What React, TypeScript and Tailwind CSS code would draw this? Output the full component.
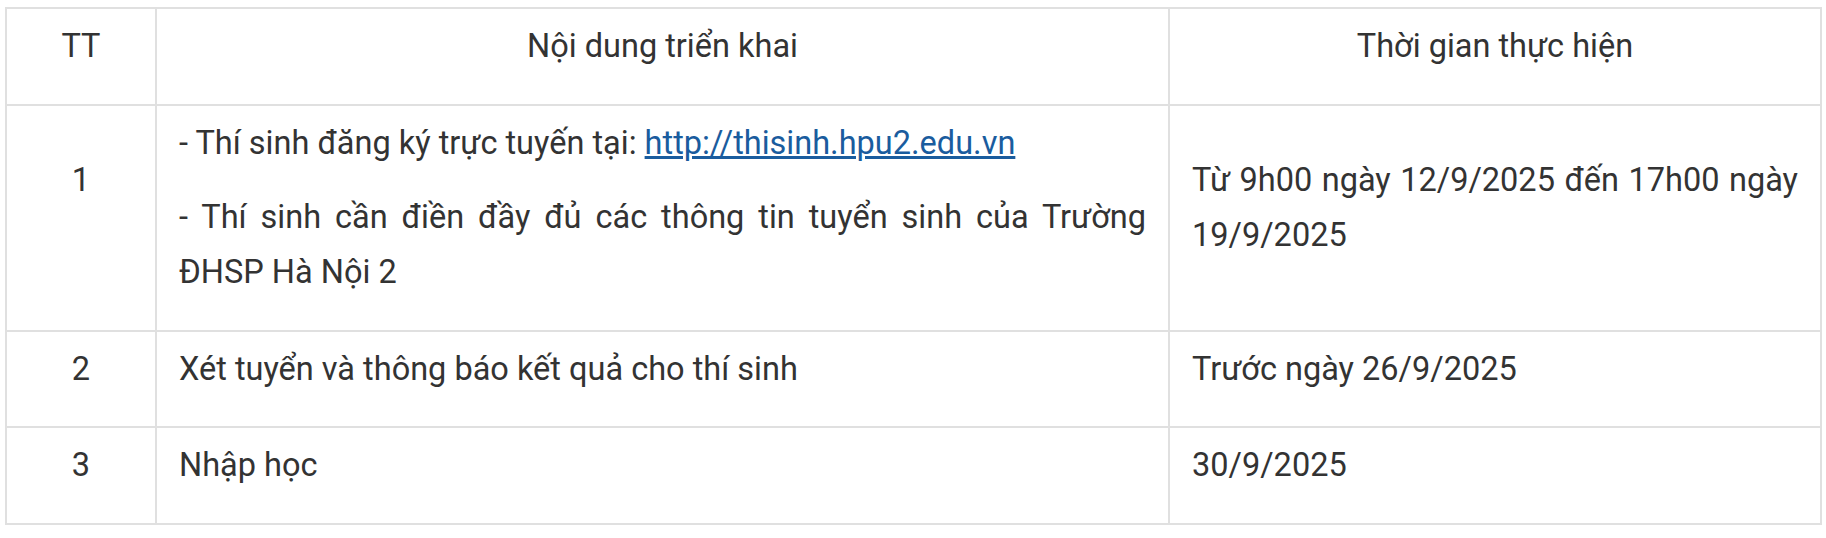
export default function App() {
  const cell = "border-2 border-[#e0e0e0] px-[22px] py-[10px] align-middle";
  const p = "mb-[19.5px]";

  return (
    <div className="min-h-screen bg-white pl-[5px] pt-[7px] font-['Roboto',sans-serif] text-[32.5px] leading-[55px] text-[#333]">
      <table className="w-[1815px] table-fixed border-collapse">
        <colgroup>
          <col className="w-[150px]" />
          <col className="w-[1013px]" />
          <col className="w-[652px]" />
        </colgroup>
        <thead>
          <tr>
            <th className={`${cell} text-center font-normal`}>
              <p className={p}>TT</p>
            </th>
            <th className={`${cell} text-center font-normal`}>
              <p className={p}>Nội dung triển khai</p>
            </th>
            <th className={`${cell} text-center font-normal`}>
              <p className={p}>Thời gian thực hiện</p>
            </th>
          </tr>
        </thead>
        <tbody>
          <tr>
            <td className={`${cell} pb-[65px] text-center`}>
              <p className={p}>1</p>
            </td>
            <td className={cell}>
              <p className={p}>
                - Thí sinh đăng ký trực tuyến tại:{" "}
                <a href="#" className="text-[#1a5c9e] underline">
                  http://thisinh.hpu2.edu.vn
                </a>
              </p>
              <p className={`${p} text-justify`}>
                - Thí sinh cần điền đầy đủ các thông tin tuyển sinh của Trường ĐHSP Hà Nội 2
              </p>
            </td>
            <td className={cell}>
              <p className={`${p} text-justify`}>
                Từ 9h00 ngày 12/9/2025 đến 17h00 ngày 19/9/2025
              </p>
            </td>
          </tr>
          <tr>
            <td className={`${cell} text-center`}>
              <p className={p}>2</p>
            </td>
            <td className={cell}>
              <p className={p}>Xét tuyển và thông báo kết quả cho thí sinh</p>
            </td>
            <td className={cell}>
              <p className={p}>Trước ngày 26/9/2025</p>
            </td>
          </tr>
          <tr>
            <td className={`${cell} text-center`}>
              <p className={p}>3</p>
            </td>
            <td className={cell}>
              <p className={p}>Nhập học</p>
            </td>
            <td className={cell}>
              <p className={p}>30/9/2025</p>
            </td>
          </tr>
        </tbody>
      </table>
    </div>
  );
}
